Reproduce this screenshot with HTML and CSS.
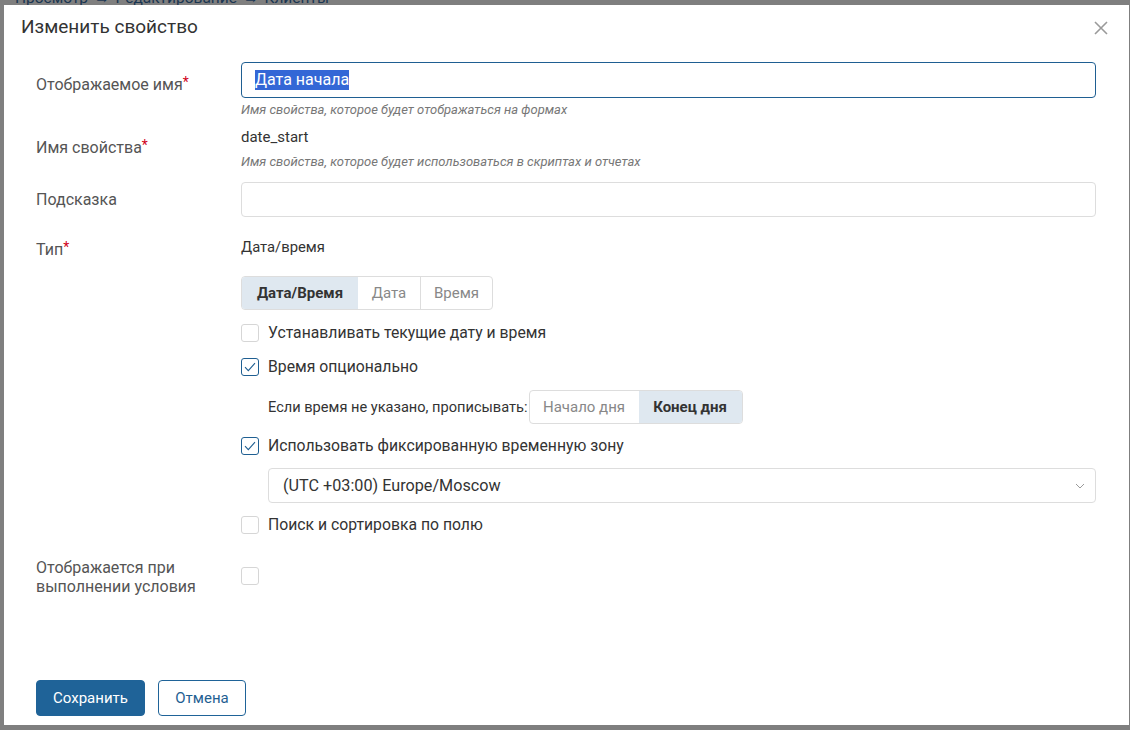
FILE: index.html
```html
<!DOCTYPE html>
<html lang="ru">
<head>
<meta charset="utf-8">
<title>Изменить свойство</title>
<link rel="stylesheet" href="styles.css">
</head>
<body>
<div class="crumbs"><span>Просмотр</span><span class="sep">→</span><span>Редактирование</span><span class="sep">→</span><span>Клиенты</span></div>
<div class="modal">
  <div class="modal-head">
    <div class="modal-title">Изменить свойство</div>
    <button class="close" aria-label="Закрыть">
      <svg width="14" height="14" viewBox="0 0 14 14"><path d="M1 1L13 13M13 1L1 13" stroke="#9a9a9a" stroke-width="1.6" fill="none"/></svg>
    </button>
  </div>
  <div class="modal-body">
    <div class="row">
      <div class="label lp-input">Отображаемое имя<span class="req">*</span></div>
      <div class="field">
        <div class="input focused"><span class="sel">Дата начала</span></div>
        <div class="hint hint-a">Имя свойства, которое будет отображаться на формах</div>
      </div>
    </div>
    <div class="row row-name">
      <div class="label lp-name">Имя свойства<span class="req">*</span></div>
      <div class="field">
        <div class="value">date_start</div>
        <div class="hint hint-b">Имя свойства, которое будет использоваться в скриптах и отчетах</div>
      </div>
    </div>
    <div class="row row-tip">
      <div class="label lp-tip">Подсказка</div>
      <div class="field">
        <div class="input plain"></div>
      </div>
    </div>
    <div class="row row-type">
      <div class="label">Тип<span class="req">*</span></div>
      <div class="field">
        <div class="value type-value">Дата/время</div>
        <div class="seg seg-type">
          <div class="seg-item active w1">Дата/Время</div>
          <div class="seg-item w2">Дата</div>
          <div class="seg-item w3">Время</div>
        </div>
        <div class="check c1"><span class="box"></span><span>Устанавливать текущие дату и время</span></div>
        <div class="check c2"><span class="box on"><svg width="12" height="10" viewBox="0 0 12 10"><path d="M1 5.2L4.3 8.6L11 1.2" stroke="#1f5f92" stroke-width="1.1" fill="none"/></svg></span><span>Время опционально</span></div>
        <div class="sub sub-when">
          <span class="sub-text">Если время не указано, прописывать:</span>
          <div class="seg seg-day">
            <div class="seg-item w4">Начало дня</div>
            <div class="seg-item active w5">Конец дня</div>
          </div>
        </div>
        <div class="check c3"><span class="box on"><svg width="12" height="10" viewBox="0 0 12 10"><path d="M1 5.2L4.3 8.6L11 1.2" stroke="#1f5f92" stroke-width="1.1" fill="none"/></svg></span><span>Использовать фиксированную временную зону</span></div>
        <div class="sub">
          <div class="select">
            <span>(UTC +03:00) Europe/Moscow</span>
            <svg width="10" height="6" viewBox="0 0 10 6"><path d="M1 1L5 5L9 1" stroke="#9a9a9a" stroke-width="1" fill="none"/></svg>
          </div>
        </div>
        <div class="check c4"><span class="box"></span><span>Поиск и сортировка по полю</span></div>
      </div>
    </div>
    <div class="row row-cond">
      <div class="label two">Отображается при выполнении условия</div>
      <div class="field">
        <span class="box cond-box"></span>
      </div>
    </div>
  </div>
  <div class="modal-foot">
    <button class="btn primary">Сохранить</button>
    <button class="btn outline">Отмена</button>
  </div>
</div>
</body>
</html>
```
FILE: styles.css
```css
* { box-sizing: border-box; }
html, body { margin: 0; padding: 0; }
body {
  width: 1130px;
  height: 730px;
  overflow: hidden;
  background: #7f7f7f;
  font-family: Roboto, "Liberation Sans", sans-serif;
  color: #333;
}
.crumbs {
  height: 5px;
  overflow: hidden;
  padding-left: 15px;
  font-size: 15.5px;
  line-height: 20px;
  color: #1a3652;
  display: flex;
  gap: 6px;
}
.crumbs span { display: block; margin-top: -12px; }
.modal {
  margin: 0 1px 0 4px;
  height: 720px;
  background: #fff;
  display: flex;
  flex-direction: column;
}
.modal-head {
  height: 44px;
  display: flex;
  align-items: center;
  justify-content: space-between;
  padding: 0 21px 0 17px;
}
.modal-title {
  font-size: 19px;
  color: #333;
  margin-top: -1px;
}
.close {
  border: 0;
  background: none;
  padding: 0;
  width: 14px;
  height: 14px;
  display: flex;
  margin-top: 1px;
}
.modal-body {
  flex: 1;
  padding: 13px 33px 0 32px;
}
.row {
  display: grid;
  grid-template-columns: 205px 1fr;
}
.label {
  font-size: 16px;
  line-height: 20px;
  color: #555;
}
.req { color: #d0021b; font-size: 14px; vertical-align: 3px; }
.lp-input { padding-top: 10px; }
.lp-name { padding-top: 8px; }
.lp-tip { padding-top: 8px; }
.field { display: flex; flex-direction: column; align-items: flex-start; }
.input {
  width: 100%;
  height: 36px;
  border: 1px solid #ddd;
  border-radius: 4px;
  padding: 0 13px;
  display: flex;
  align-items: center;
  font-size: 16px;
}
.input.focused { border-color: #1f5f92; }
.input.plain { height: 35px; }
.sel {
  background: #3367d6;
  color: #fff;
  line-height: 20px;
}
.hint {
  font-size: 13px;
  line-height: 16px;
  font-style: italic;
  color: #777;
}
.hint-a { margin-top: 4px; }
.row-name { margin-top: 9px; }
.value { font-size: 15px; line-height: 20px; color: #333; }
.type-value { font-size: 14.8px; }
.hint-b { margin-top: 7px; }
.row-tip { margin-top: 12px; }
.row-type { margin-top: 20px; }
.seg {
  display: flex;
  border: 1px solid #ddd;
  border-radius: 4px;
  overflow: hidden;
  height: 34px;
}
.seg-type { margin-top: 19px; }
.seg-item {
  display: flex;
  align-items: center;
  justify-content: center;
  font-size: 15px;
  color: #888;
  border-left: 1px solid #ddd;
}
.seg-item:first-child { border-left: 0; }
.seg-item.active { background: #dfe8f0; color: #333; font-weight: 700; border-left: 0; }
.seg-item.active + .seg-item { border-left: 0; }
.w1 { width: 116px; }
.w2 { width: 62px; }
.w3 { width: 72px; }
.w4 { width: 109px; }
.w5 { width: 103px; }
.check {
  display: flex;
  align-items: center;
  gap: 9px;
  font-size: 15.75px;
  line-height: 18px;
  color: #333;
}
.box {
  width: 18px;
  height: 18px;
  border: 1px solid #d6d6d6;
  border-radius: 3px;
  display: flex;
  align-items: center;
  justify-content: center;
  flex: none;
  background: #fff;
}
.box.on { border-color: #1f5f92; }
.c1 { margin-top: 14px; }
.c2 { margin-top: 16px; }
.sub {
  margin-left: 27px;
  align-self: stretch;
  display: flex;
  align-items: center;
}
.sub-when { margin-top: 14px; }
.sub-text { font-size: 14.6px; color: #333; margin-right: 1px; }
.c3 { margin-top: 13px; }
.select {
  margin-top: 13px;
  width: 100%;
  height: 35px;
  border: 1px solid #ddd;
  border-radius: 4px;
  display: flex;
  align-items: center;
  justify-content: space-between;
  padding: 0 10px 0 14px;
  font-size: 16.2px;
  color: #333;
}
.c4 { margin-top: 13px; }
.row-cond { margin-top: 24px; }
.label.two { line-height: 19px; width: 170px; }
.cond-box { margin-top: 9px; }
.modal-foot {
  display: flex;
  gap: 13px;
  padding: 0 32px 9px;
}
.btn {
  height: 36px;
  border-radius: 4px;
  font-family: inherit;
  font-size: 15px;
  padding: 0;
}
.btn.primary {
  width: 109px;
  background: #1f6398;
  border: 1px solid #1f6398;
  color: #fff;
}
.btn.outline {
  width: 88px;
  background: #fff;
  border: 1px solid #1f6398;
  color: #1f5f92;
}
```
